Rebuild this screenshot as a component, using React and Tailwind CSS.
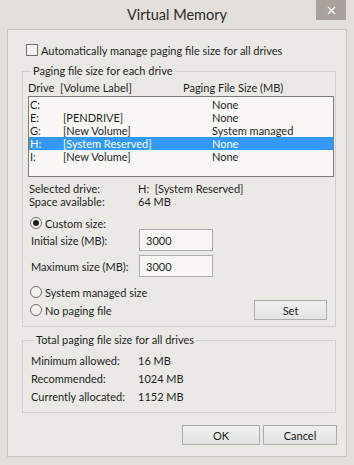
import React from 'react';

const font = { fontFamily: 'Lato, "Noto Sans", sans-serif' };

const drives = [
  { letter: 'C:', label: '', size: 'None' },
  { letter: 'E:', label: '[PENDRIVE]', size: 'None' },
  { letter: 'G:', label: '[New Volume]', size: 'System managed' },
  { letter: 'H:', label: '[System Reserved]', size: 'None', selected: true },
  { letter: 'I:', label: '[New Volume]', size: 'None' },
];

const Radio = ({ checked, children }) => (
  <div className="flex items-center h-[14px]">
    <span className="w-[12px] h-[12px] shrink-0 rounded-full border border-[#6d6d6d] bg-[#f4f2ef] flex items-center justify-center">
      {checked && <span className="w-[6px] h-[6px] rounded-full bg-[#1e1e1e]" />}
    </span>
    <span className="ml-[3px]">{children}</span>
  </div>
);

const Btn = ({ w, children }) => (
  <button className={`${w} h-[20px] shrink-0 border border-[#acacac] bg-gradient-to-b from-[#f0f0f0] to-[#e3e3e3] text-[#1a1a1a] leading-none`}>
    {children}
  </button>
);

export default function App() {
  return (
    <div className="w-[354px] h-[465px] bg-[#e3e0dc] text-[11px] leading-[13px] text-[#1f1f1f] whitespace-nowrap flex flex-col" style={font}>
      {/* title bar */}
      <div className="h-[29px] grid grid-cols-[1fr_auto_1fr] shrink-0">
        <div />
        <div className="text-[14.5px] text-[#2b2b2b] pt-[5px] leading-[20px]">Virtual Memory</div>
        <div className="flex justify-end pr-[8px]">
          <div className="w-[30px] h-[20px] bg-[#a9a19c] flex items-center justify-center">
            <svg width="9" height="9" viewBox="0 0 9 9">
              <path d="M1 1 L8 8 M8 1 L1 8" stroke="#ffffff" strokeWidth="1.4" />
            </svg>
          </div>
        </div>
      </div>

      {/* content panel */}
      <div className="mx-[7px] w-[340px] h-[428px] border border-[#c9c6c2] bg-[#ebe9e6] pl-[14px] pr-[9px] flex flex-col">
        <div className="mt-[13px] h-[14px] flex items-center pl-[4px]">
          <span className="w-[12px] h-[12px] shrink-0 border border-[#707070] bg-[#f5f3f0]" />
          <span className="ml-[3px]">Automatically manage paging file size for all drives</span>
        </div>

        <fieldset className="mt-[6px] w-[314px] border border-[#d3d0cc] pl-[5px] pr-[1px] pb-[6px]">
          <legend className="ml-[3px] px-[2px] h-[16px] leading-[16px]">Paging file size for each drive</legend>
          <div className="mt-[1px] h-[14px] flex items-center">
            <span className="w-[32px] shrink-0">Drive</span>
            <span className="w-[123px] shrink-0">[Volume Label]</span>
            <span>Paging File Size (MB)</span>
          </div>
          <div className="mt-[2px] h-[81px] border border-[#7d7b78] bg-[#f9f8f6] pt-[1px]">
            {drives.map((d) => (
              <div
                key={d.letter}
                className={`h-[13px] flex items-center ${d.selected ? 'bg-[#3399ff] text-white' : ''}`}
              >
                <span className="w-[34px] shrink-0 pl-[1px]">{d.letter}</span>
                <span className="w-[149px] shrink-0">{d.label}</span>
                <span>{d.size}</span>
              </div>
            ))}
          </div>
          <div className="mt-[5px] h-[13px] flex items-center pl-[1px]">
            <span className="w-[109px] shrink-0">Selected drive:</span>
            <span>H:&nbsp;&nbsp;[System Reserved]</span>
          </div>
          <div className="h-[13px] flex items-center pl-[1px]">
            <span className="w-[109px] shrink-0">Space available:</span>
            <span>64 MB</span>
          </div>
          <div className="mt-[8px] pl-[2px]">
            <Radio checked>Custom size:</Radio>
          </div>
          <div className="mt-[-1px] h-[22px] flex items-center pl-[3px]">
            <span className="w-[108px] shrink-0">Initial size (MB):</span>
            <div className="w-[74px] h-[22px] shrink-0 border border-[#abadb3] bg-[#f7f6f4] pl-[6px] flex items-center">3000</div>
          </div>
          <div className="mt-[4px] h-[22px] flex items-center pl-[3px]">
            <span className="w-[108px] shrink-0">Maximum size (MB):</span>
            <div className="w-[74px] h-[22px] shrink-0 border border-[#abadb3] bg-[#f7f6f4] pl-[6px] flex items-center">3000</div>
          </div>
          <div className="mt-[8px] pl-[2px]">
            <Radio>System managed size</Radio>
          </div>
          <div className="mt-[1px] h-[20px] flex items-center justify-between pl-[2px] pr-[7px]">
            <Radio>No paging file</Radio>
            <Btn w="w-[73px]">Set</Btn>
          </div>
        </fieldset>

        <fieldset className="mt-[5px] w-[314px] border border-[#d3d0cc] pl-[8px] pb-[7px]">
          <legend className="ml-[3px] px-[2px] h-[16px] leading-[16px]">Total paging file size for all drives</legend>
          <div className="mt-[3px] h-[18px] flex items-center">
            <span className="w-[107px] shrink-0">Minimum allowed:</span>
            <span>16 MB</span>
          </div>
          <div className="h-[18px] flex items-center">
            <span className="w-[107px] shrink-0">Recommended:</span>
            <span>1024 MB</span>
          </div>
          <div className="h-[18px] flex items-center">
            <span className="w-[107px] shrink-0">Currently allocated:</span>
            <span>1152 MB</span>
          </div>
        </fieldset>

        <div className="mt-[12px] flex justify-end gap-[3px]">
          <Btn w="w-[78px]">OK</Btn>
          <Btn w="w-[74px]">Cancel</Btn>
        </div>
      </div>
    </div>
  );
}
